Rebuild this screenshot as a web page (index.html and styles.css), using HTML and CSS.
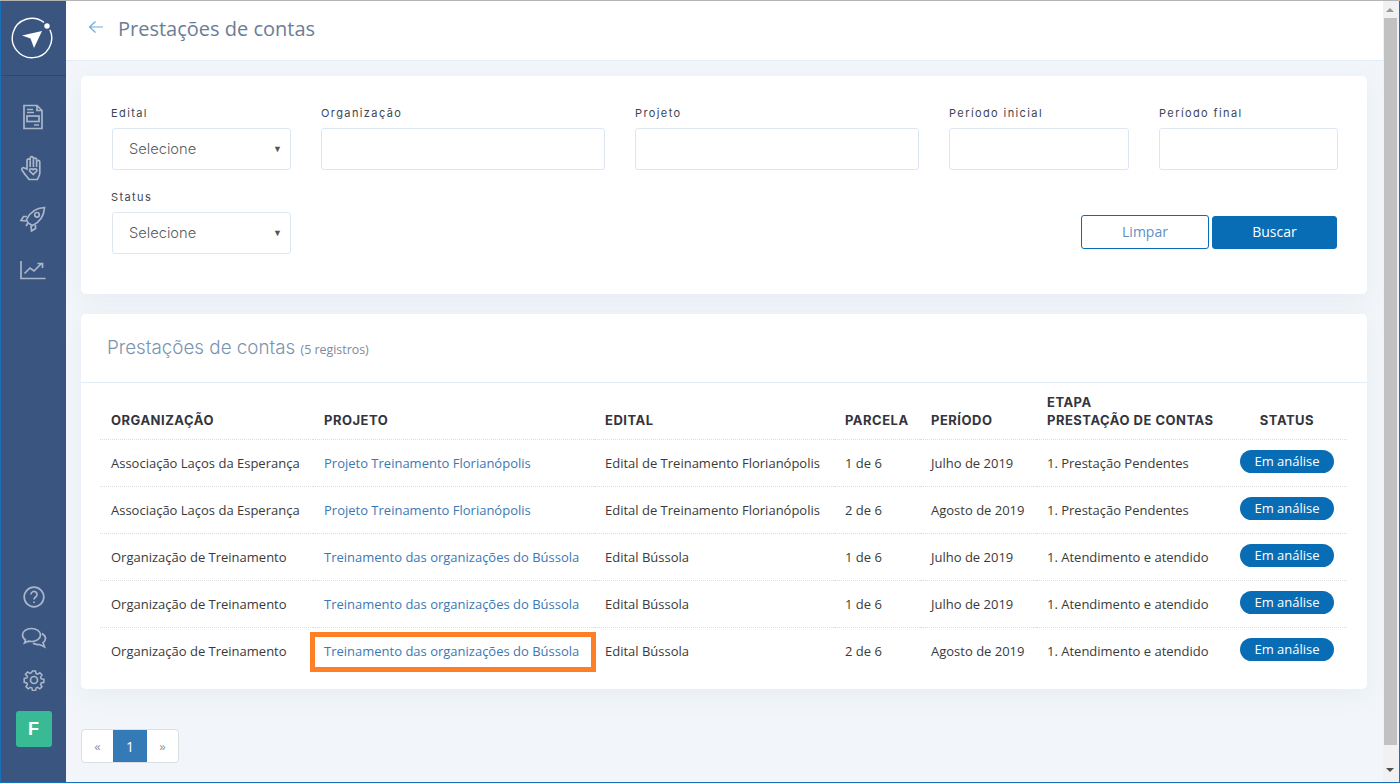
FILE: index.html
```html
<!DOCTYPE html>
<html lang="pt-BR">
<head>
<meta charset="utf-8">
<title>Prestações de contas</title>
<link rel="stylesheet" href="styles.css">
</head>
<body>
<div class="app">
  <aside class="sidebar">
    <div class="logo">
      <svg width="44" height="44" viewBox="0 0 44 44" fill="none">
        <path d="M39.9 13.77A19.7 19.7 0 1 1 33.94 6.33" stroke="#fff" stroke-width="1.4"/>
        <circle cx="37" cy="10" r="2.7" fill="#fff"/>
        <path d="M12 19.500 L32 15 L24 32 L20.500 22.500 Z" fill="#fff"/>
      </svg>
    </div>
    <nav class="nav-top">
      <svg class="ico" width="22" height="26" viewBox="0 0 22 26"><path d="M2 1.500h13l5 5v18H2zM15 1.500v5h5M5 5.500h6M5 8.500h7M12 21h5"/><rect x="5" y="12" width="12" height="5.500"/></svg>
      <svg class="ico" width="26" height="26" viewBox="0 0 26 26"><path d="M7 14V5.500a1.600 1.600 0 0 1 3.200 0V3.200a1.600 1.600 0 0 1 3.200 0v1.600a1.600 1.600 0 0 1 3.200 0V7a1.600 1.600 0 0 1 3.200 0v11c0 3-2 5-2.500 6.500H9c-1-2-3-3.500-5-6.500l-2-3c-1-1.500 1-3 2.300-2z"/><path d="M10.200 5.500V12M13.400 4.800V12M16.600 7V12M13.200 19.500l-3.400-3.300c-1.300-1.700 1.700-3.500 3.400-1.500 1.700-2 4.700-.2 3.400 1.500z"/></svg>
      <svg class="ico" width="26" height="26" viewBox="0 0 26 26"><path d="M8 17l-1.500-3.500C10 6 16 2 24.500 1.500 24 10 20 16 12.500 19.500z"/><circle cx="17" cy="8.800" r="2.300"/><path d="M7 10.500H3.500L1 14.500l5.500.5M15.500 19v3.500L11.500 25l-.5-5.500M8 17l-2 3"/></svg>
      <svg class="ico ico-chart" width="26" height="20" viewBox="0 0 26 20"><path d="M1 1v17.500h24.500M4.500 13.500l5.500-5.500 4 3 7.500-7.500M17.500 3.500h5v4.500"/></svg>
    </nav>
    <nav class="nav-bottom">
      <svg class="ico" width="22" height="22" viewBox="0 0 22 22"><circle cx="11" cy="11" r="9.800"/><path d="M8 8.500a3 3 0 1 1 4.600 2.500c-1 .7-1.600 1.200-1.600 2.500"/><path d="M11 15.500v1.500"/></svg>
      <svg class="ico" width="26" height="22" viewBox="0 0 26 22"><path d="M10.500 1.500c-5 0-9 2.800-9 6.500 0 2 1.200 3.700 3 5l-1 3 4-1.800c1 .2 2 .3 3 .3 5 0 9-2.800 9-6.500s-4-6.500-9-6.500z"/><path d="M20.800 6.500c2.200 1.200 3.700 3 3.700 5 0 1.700-1 3.200-2.500 4.300l1.500 4-5-2.300c-2.500.3-5-.2-6.500-1.500"/></svg>
      <svg class="ico ico-gear" width="22" height="22" viewBox="0 0 22 22"><circle cx="11" cy="11" r="3.500"/><path d="M9.300 1h3.400l.6 2.900 1.700.7 2.500-1.600 2.400 2.400-1.600 2.500.7 1.700 3 .6v3.400l-3 .6-.7 1.700 1.600 2.500-2.400 2.400-2.500-1.600-1.700.7-.6 2.900H9.300l-.6-2.900-1.700-.7-2.500 1.600-2.400-2.400 1.600-2.500-.7-1.700-2.900-.6V9.300l2.900-.6.7-1.700L1.500 4.500 3.900 2l2.500 1.600 1.700-.7z" transform="translate(1.100 1.100) scale(.9)"/></svg>
      <div class="avatar">F</div>
    </nav>
  </aside>

  <div class="main">
    <header class="topbar">
      <svg class="back" width="16" height="14" viewBox="0 0 16 14" fill="none"><path d="M15 7H2M7.500 1.500L1.500 7l6 5.500" stroke="#6aa9e0" stroke-width="1.200"/></svg>
      <h1 class="page-title">Prestações de contas</h1>
    </header>

    <div class="content">
      <section class="card filters">
        <div class="filter-row">
          <div class="field w-sm"><label class="flabel">Edital</label><div class="control select">Selecione<span class="caret">▼</span></div></div>
          <div class="field w-lg"><label class="flabel">Organização</label><div class="control"></div></div>
          <div class="field w-lg"><label class="flabel">Projeto</label><div class="control"></div></div>
          <div class="field w-date"><label class="flabel">Período inicial</label><div class="control"></div></div>
          <div class="field w-final"><label class="flabel">Período final</label><div class="control"></div></div>
        </div>
        <div class="filter-row second">
          <div class="field w-sm"><label class="flabel">Status</label><div class="control select">Selecione<span class="caret">▼</span></div></div>
          <div class="actions">
            <button class="btn outline">Limpar</button>
            <button class="btn solid">Buscar</button>
          </div>
        </div>
      </section>

      <section class="card results">
        <div class="results-head">
          <h2 class="results-title">Prestações de contas <small class="count">(5 registros)</small></h2>
        </div>
        <div class="table-wrap">
          <table class="table">
            <thead>
              <tr>
                <th class="c1">ORGANIZAÇÃO</th><th class="c2">PROJETO</th><th class="c3">EDITAL</th><th class="c4">PARCELA</th><th class="c5">PERÍODO</th><th class="c6">ETAPA<br>PRESTAÇÃO DE CONTAS</th><th class="c7">STATUS</th>
              </tr>
            </thead>
            <tbody>
              <tr><td>Associação Laços da Esperança</td><td><a class="link">Projeto Treinamento Florianópolis</a></td><td>Edital de Treinamento Florianópolis</td><td>1 de 6</td><td>Julho de 2019</td><td>1. Prestação Pendentes</td><td class="st"><span class="pill">Em análise</span></td></tr>
              <tr><td>Associação Laços da Esperança</td><td><a class="link">Projeto Treinamento Florianópolis</a></td><td>Edital de Treinamento Florianópolis</td><td>2 de 6</td><td>Agosto de 2019</td><td>1. Prestação Pendentes</td><td class="st"><span class="pill">Em análise</span></td></tr>
              <tr><td>Organização de Treinamento</td><td><a class="link">Treinamento das organizações do Bússola</a></td><td>Edital Bússola</td><td>1 de 6</td><td>Julho de 2019</td><td>1. Atendimento e atendido</td><td class="st"><span class="pill">Em análise</span></td></tr>
              <tr><td>Organização de Treinamento</td><td><a class="link">Treinamento das organizações do Bússola</a></td><td>Edital Bússola</td><td>1 de 6</td><td>Julho de 2019</td><td>1. Atendimento e atendido</td><td class="st"><span class="pill">Em análise</span></td></tr>
              <tr><td>Organização de Treinamento</td><td class="marked"><a class="link">Treinamento das organizações do Bússola</a><span class="highlight"></span></td><td>Edital Bússola</td><td>2 de 6</td><td>Agosto de 2019</td><td>1. Atendimento e atendido</td><td class="st"><span class="pill">Em análise</span></td></tr>
            </tbody>
          </table>
        </div>
      </section>

      <div class="pager">
        <span class="pg">«</span><span class="pg active">1</span><span class="pg">»</span>
      </div>
    </div>
  </div>

  <div class="scrollbar">
    <span class="arrow up"></span>
    <div class="thumb"></div>
    <span class="arrow down"></span>
  </div>
</div>
</body>
</html>
```
FILE: styles.css
```css
* { box-sizing: border-box; }
html, body { margin: 0; height: 100%; overflow: hidden; }
body { font-family: "Open Sans", sans-serif; font-size: 13px; color: #333; background: #f2f6fa; }
.app { display: flex; height: 783px; border-top: 1px solid #b4b4b4; border-bottom: 1px solid #1a6fb8; }

.sidebar { width: 66px; flex: none; background: #3a557f; border-left: 1px solid #1a6fb8; display: flex; flex-direction: column; }
.logo { height: 75px; border-bottom: 1px solid #2f4870; display: flex; align-items: center; padding-left: 9px; }
.ico { fill: none; stroke: #aab6ca; stroke-width: 1.700; display: block; }
.nav-top { display: flex; flex-direction: column; align-items: center; gap: 25px; padding-top: 28px; padding-right: 2px; }
.ico-chart { margin-top: 3px; }
.nav-bottom { margin-top: auto; display: flex; flex-direction: column; align-items: center; gap: 19px; padding-bottom: 35px; }
.ico-gear { margin-top: 1px; }
.avatar { width: 36px; height: 36px; margin-top: 1px; border-radius: 3px; background: #38bb94; color: #fff; font: bold 18px "Liberation Sans", sans-serif; display: flex; align-items: center; justify-content: center; }

.main { width: 1318px; flex: none; min-width: 0; }
.topbar { height: 60px; background: #fff; border-bottom: 1px solid #e3edf6; display: flex; align-items: center; padding: 0 0 4px 22px; }
.back { margin-top: -4px; }
.page-title { margin: 0 0 0 14px; font: 400 20px "Open Sans", sans-serif; color: #6b7d96; }

.content { padding: 15px 17px 0 15px; }
.card { background: #fff; border-radius: 5px; box-shadow: 0 6px 24px rgba(90, 120, 150, .07); }
.filters { height: 218px; padding: 30px 28px 0 30px; margin-bottom: 20px; }
.filter-row { display: flex; gap: 30px; }
.filter-row.second { margin-top: 20px; align-items: flex-end; justify-content: space-between; }
.field { display: flex; flex-direction: column; }
.w-sm { width: 180px; }
.w-lg { width: 284px; }
.w-date { width: 180px; }
.w-final { width: 179px; }
.flabel { font: 400 11px/14px "Inter", sans-serif; letter-spacing: 1.400px; color: #3c4654; margin-bottom: 8px; }
.control { height: 42px; border: 1px solid #dde7f1; border-radius: 3px; background: #fff; }
.select { margin-left: 1px; display: flex; align-items: center; justify-content: space-between; padding: 0 8px 1px 16px; font: 300 14.700px "Inter", sans-serif; color: #555b62; }
.caret { font-size: 9px; color: #555; font-family: "DejaVu Sans", sans-serif; }
.actions { display: flex; gap: 3px; padding-bottom: 5px; padding-right: 2px; }
.btn { height: 33px; border-radius: 3px; font: 400 14px "Open Sans", sans-serif; padding: 0 0 2px; cursor: pointer; }
.btn.outline { width: 128px; background: #fff; border: 1px solid #096db5; color: #5d90c9; height: 34px; margin-top: -1px; }
.btn.solid { width: 125px; background: #096db5; border: 1px solid #096db5; color: #fff; }

.results { height: 375px; }
.results-head { height: 69px; border-bottom: 1px solid #e3edf6; padding: 20px 0 0 26px; }
.results-title { margin: 0; font: 300 18.800px/28px "Inter", sans-serif; color: #7b94b0; }
.count { font: 400 12.400px "Open Sans", sans-serif; color: #7d8a99; }
.table-wrap { padding: 0 20px 0 19px; }
.table { width: 100%; border-collapse: collapse; table-layout: fixed; }
.table th { font: 700 13px/18px "Inter", sans-serif; letter-spacing: .5px; color: #34343c; text-align: left; vertical-align: bottom; padding: 10px 0 10px 11px; height: 56px; border-bottom: 1px dotted #d8dde2; }
.table td { height: 47px; padding: 0 0 0 11px; border-bottom: 1px dotted #d8dde2; font-size: 13px; color: #3a3a3a; white-space: nowrap; position: relative; }
.table tbody tr:last-child td { border-bottom: 0; }
.c1 { width: 213px; }
.c2 { width: 281px; }
.c3 { width: 240px; }
.c4 { width: 86px; }
.c5 { width: 116px; }
.c6 { width: 184px; }
.table th.c7 { text-align: center; padding-left: 7px; }
.table td.st { text-align: center; padding-left: 7px; }
.link { color: #3c78b4; }
.pill { display: inline-block; width: 94px; height: 23px; line-height: 22px; border-radius: 12px; background: #096db5; color: #fff; font-size: 13px; position: relative; top: -2px; }
.highlight { position: absolute; left: -3px; top: 4px; width: 286px; height: 40px; border: 5px solid #ff7f27; pointer-events: none; }

.pager { display: flex; width: 98px; height: 34px; margin-top: 40px; border: 1px solid #dcdfe3; border-radius: 4px; background: #fff; }
.pg { flex: 1; display: flex; align-items: center; justify-content: center; color: #8b96a5; font-size: 13px; }
.pg.active { flex: none; width: 34px; background: #337ab7; color: #fff; font-weight: 500; font-size: 14px; }

.scrollbar { position: absolute; top: 1px; right: 0; width: 17px; height: 781px; background: #f1f1f1; border-right: 1px solid #1a6fb8; }
.thumb { width: 13px; height: 727px; margin: 0 1px; background: #c1c1c1; }
.arrow { display: block; width: 0; height: 0; margin-left: 3px; border-left: 4px solid transparent; border-right: 4px solid transparent; }
.arrow.up { border-bottom: 4px solid #9a9a9a; margin-top: 7px; margin-bottom: 6px; }
.arrow.down { border-top: 4px solid #505050; margin-top: 23px; }
```
